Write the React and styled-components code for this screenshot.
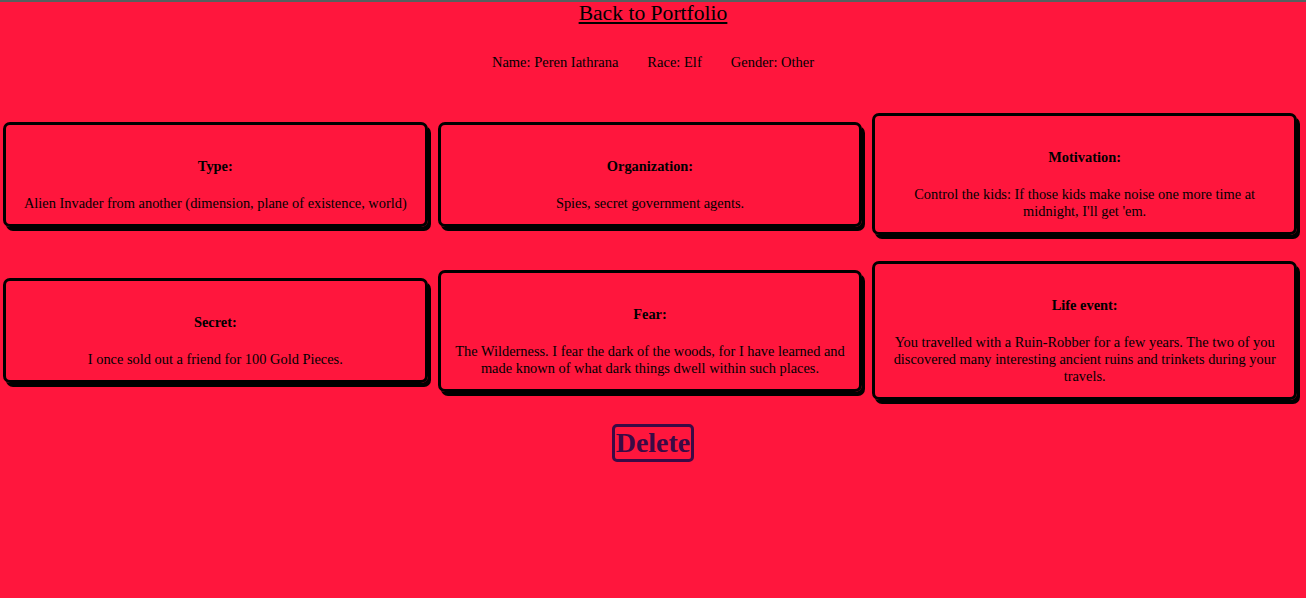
import styled, { createGlobalStyle } from "styled-components"

const GlobalStyle = createGlobalStyle`
    html, body {
        margin: 0;
        padding: 0;
        background-color: #ff163d;
    }
    body {
        border-top: 2px solid #56605f;
        min-height: 596px;
        font-family: "Liberation Serif", "Times New Roman", serif;
        color: #000;
    }
`

const Page = styled.div`
    display: flex;
    flex-direction: column;
    align-items: center;
`

const BackLink = styled.a`
    font-size: 21.6px;
    color: #000;
    text-decoration: underline;
    line-height: 23px;
`

const InfoRow = styled.div`
    display: flex;
    gap: 29px;
    font-size: 14.5px;
    line-height: 17px;
    margin-top: 29px;
    margin-bottom: 42px;
`

const CardRow = styled.div`
    align-self: stretch;
    display: grid;
    grid-template-columns: repeat(3, 1fr);
    align-items: center;
    gap: 10px;
    padding: 0 9px 0 3px;
    margin-bottom: ${(p) => p.$space}px;
`

const Card = styled.div`
    border: 3px solid #000;
    border-radius: 7px;
    box-shadow: 3px 4px 0 #000;
    padding: 12px 12px;
    text-align: center;
    font-size: 14.4px;
`

const CardTitle = styled.div`
    font-weight: 700;
    margin: 21px 0 20px;
    line-height: 17px;
`

const CardText = styled.div`
    line-height: 17px;
`

const DeleteButton = styled.button`
    font-family: "Liberation Serif", "Times New Roman", serif;
    font-weight: 700;
    font-size: 28px;
    line-height: 32px;
    color: #3b0a45;
    background: transparent;
    border: 3px solid #3b0a45;
    border-radius: 5px;
    padding: 0 1px;
`

const rows = [
    [
        ["Type:", "Alien Invader from another (dimension, plane of existence, world)"],
        ["Organization:", "Spies, secret government agents."],
        ["Motivation:", "Control the kids: If those kids make noise one more time at midnight, I'll get 'em."],
    ],
    [
        ["Secret:", "I once sold out a friend for 100 Gold Pieces."],
        ["Fear:", "The Wilderness. I fear the dark of the woods, for I have learned and made known of what dark things dwell within such places."],
        ["Life event:", "You travelled with a Ruin-Robber for a few years. The two of you discovered many interesting ancient ruins and trinkets during your travels."],
    ],
]

export default function App() {
    return (
        <>
            <GlobalStyle />
            <Page>
                <BackLink href="#">Back to Portfolio</BackLink>
                <InfoRow>
                    <span>Name: Peren Iathrana</span>
                    <span>Race: Elf</span>
                    <span>Gender: Other</span>
                </InfoRow>
                {rows.map((row, i) => (
                    <CardRow key={i} $space={i === 0 ? 26 : 24}>
                        {row.map(([title, text]) => (
                            <Card key={title}>
                                <CardTitle>{title}</CardTitle>
                                <CardText>{text}</CardText>
                            </Card>
                        ))}
                    </CardRow>
                ))}
                <DeleteButton>Delete</DeleteButton>
            </Page>
        </>
    )
}
